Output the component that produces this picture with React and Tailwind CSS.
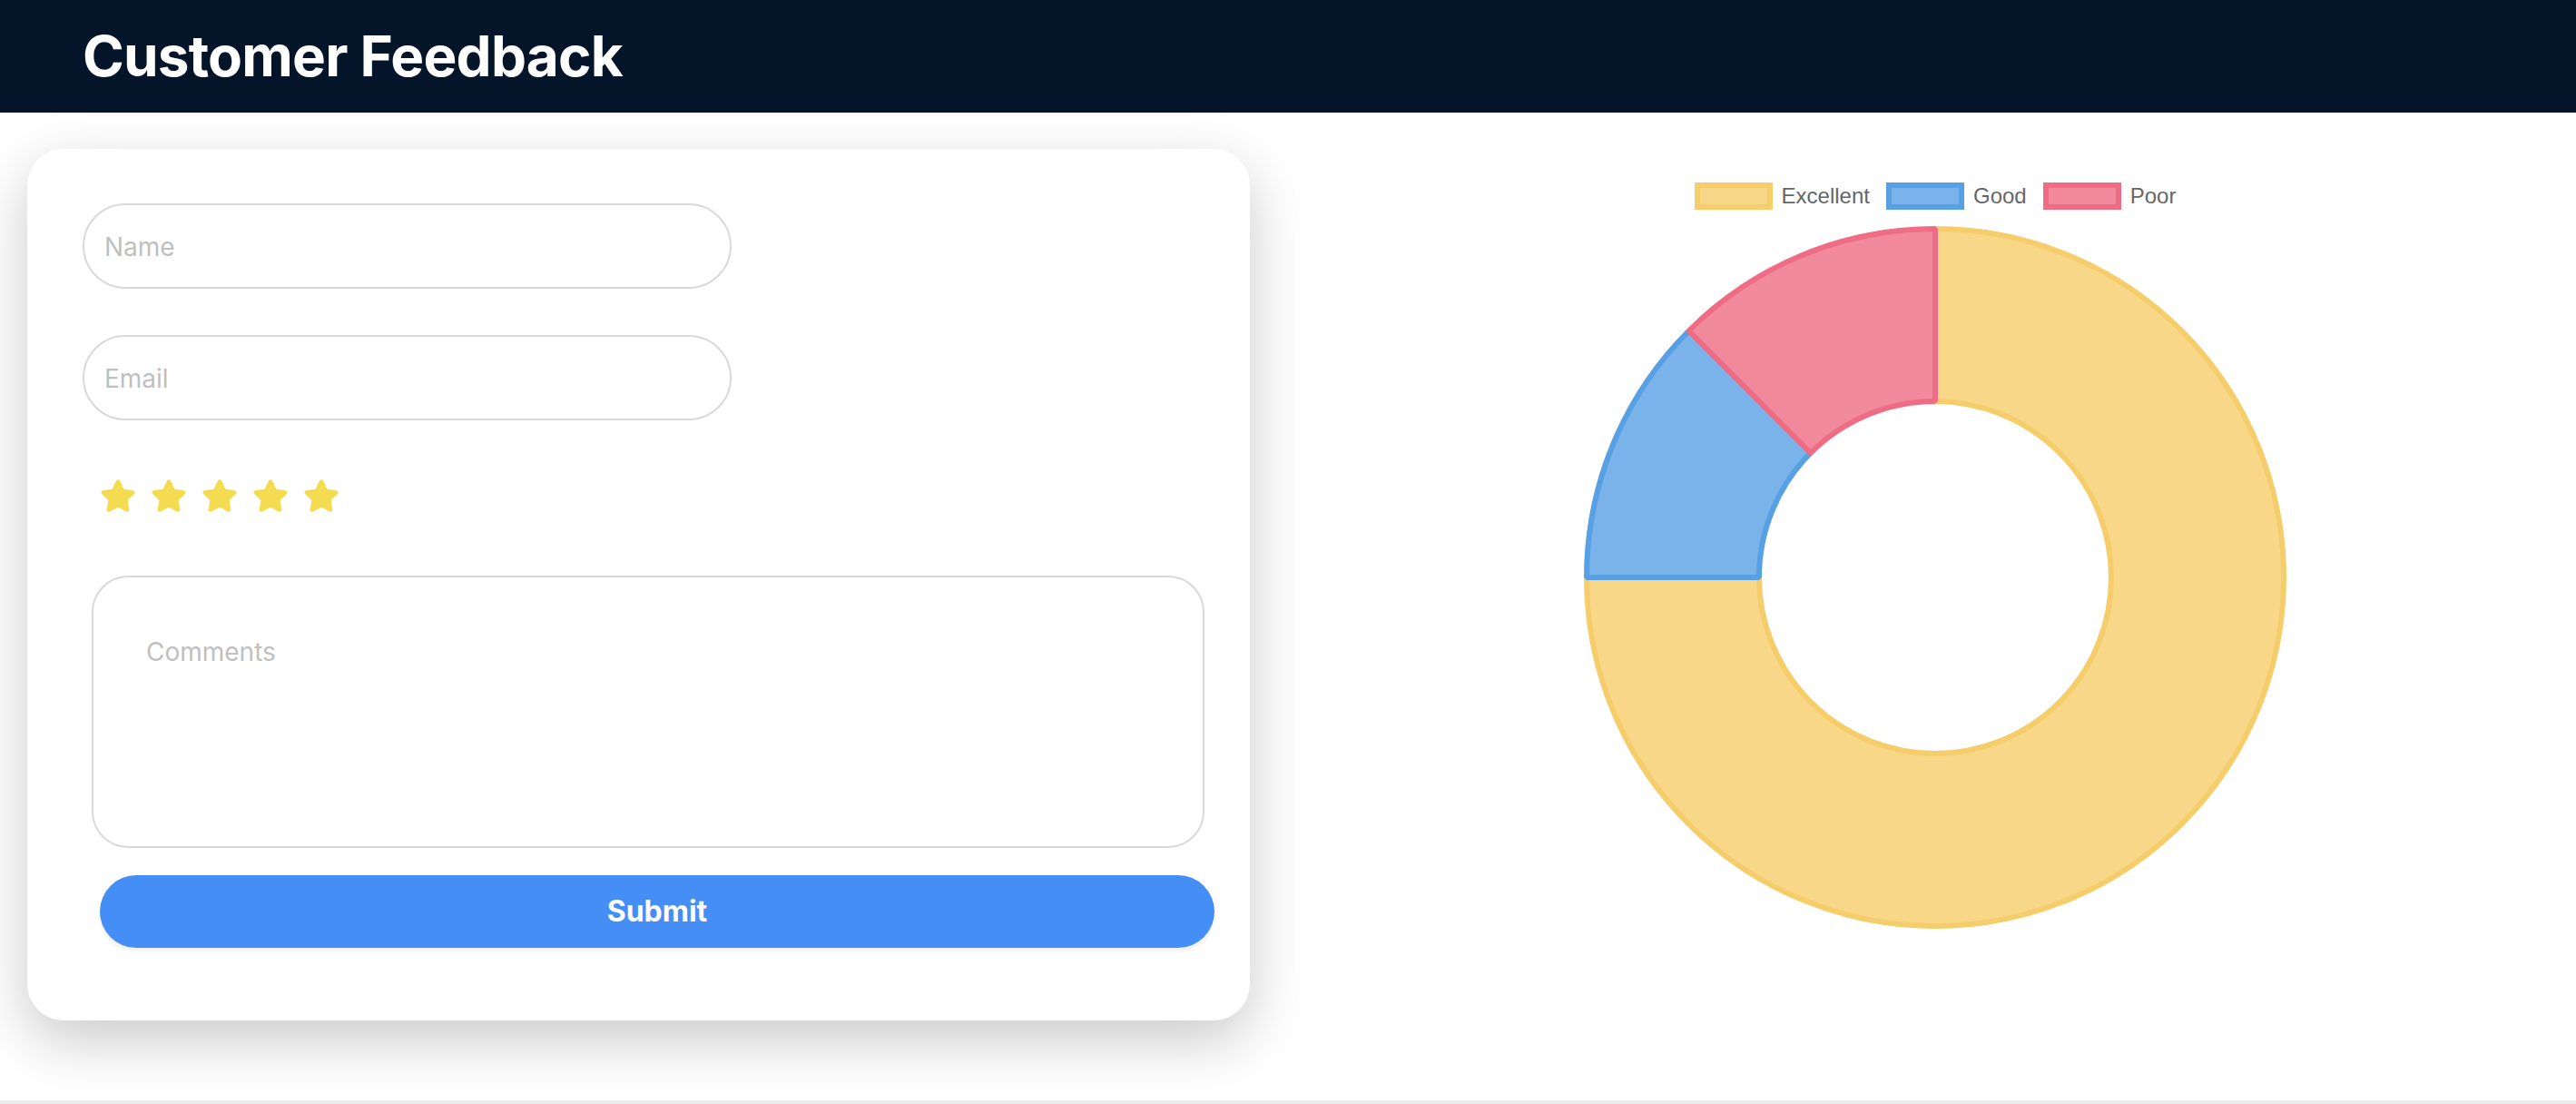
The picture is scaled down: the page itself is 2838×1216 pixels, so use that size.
import React from "react";
import { FaStar } from "react-icons/fa";

const legend = [
  { label: "Excellent", fill: "#f8d888", border: "#f5ce6b" },
  { label: "Good", fill: "#79b3e9", border: "#58a0e4" },
  { label: "Poor", fill: "#f18a9d", border: "#ee6d85" },
];

// donut slices: 6 / 1 / 1 -> 75% / 12.5% / 12.5%, drawn from 12 o'clock clockwise
const slices = [
  {
    d: "M390,6 A384,384 0 1 1 6,390 L196,390 A194,194 0 1 0 390,196 Z",
    fill: "#f8d888",
    stroke: "#f5ce6b",
  },
  {
    d: "M6,390 A384,384 0 0 1 118.5,118.5 L252.8,252.8 A194,194 0 0 0 196,390 Z",
    fill: "#79b3e9",
    stroke: "#58a0e4",
  },
  {
    d: "M118.5,118.5 A384,384 0 0 1 390,6 L390,196 A194,194 0 0 0 252.8,252.8 Z",
    fill: "#f18a9d",
    stroke: "#ee6d85",
  },
];

const FeedbackChart = () => {
  return (
    <div className="flex flex-col items-center pt-[77px]">
      <div className="flex items-center h-[30px] font-['Liberation_Sans',Arial,sans-serif] text-[24px] text-[#666666]">
        {legend.map((item, i) => (
          <div key={i} className={`flex items-center ${i > 0 ? "ml-[18px]" : ""}`}>
            <span
              className="block w-[86px] h-[30px] border-[6px]"
              style={{ background: item.fill, borderColor: item.border }}
            ></span>
            <span className="ml-[10px] leading-none">{item.label}</span>
          </div>
        ))}
      </div>
      <svg width="780" height="780" viewBox="0 0 780 780" className="mt-[15px]">
        {slices.map((s, i) => (
          <path key={i} d={s.d} fill={s.fill} stroke={s.stroke} strokeWidth="6" strokeLinejoin="bevel" />
        ))}
      </svg>
    </div>
  );
};

const App = () => {
  return (
    <div className="w-[2838px] bg-white font-['Inter','Noto_Sans',sans-serif]">
      <header className="h-[124px] bg-[#041529] flex items-center pl-[91px]">
        <h1 className="text-white text-[62px] font-bold tracking-[-0.8px] leading-none">
          Customer Feedback
        </h1>
      </header>

      <main className="flex h-[1088px]">
        <div className="w-[1426px] shrink-0">
          <div className="ml-[30px] mt-[40px] w-[1347px] h-[960px] rounded-[40px] bg-white shadow-[0_22px_64px_rgba(0,0,0,0.21)] pt-[60px] pl-[61px]">
            <input
              type="text"
              placeholder="Name"
              className="block w-[715px] h-[94px] rounded-full border-2 border-[#d9d9d9] pl-[22px] pt-[2px] text-[28px] text-[#333] placeholder:text-[#bfbfbf] outline-none"
            />
            <input
              type="email"
              placeholder="Email"
              className="block mt-[51px] w-[715px] h-[94px] rounded-full border-2 border-[#d9d9d9] pl-[22px] pt-[2px] text-[28px] text-[#333] placeholder:text-[#bfbfbf] outline-none"
            />
            <div className="flex gap-4 mt-[63px] ml-[19px]">
              {[1, 2, 3, 4, 5].map((n) => (
                <FaStar key={n} size={40} color="#f4db4f" />
              ))}
            </div>
            <textarea
              placeholder="Comments"
              className="block mt-[68px] ml-[10px] w-[1226px] h-[300px] rounded-[40px] border-2 border-[#d9d9d9] pt-[61px] pl-[58px] text-[28px] text-[#333] placeholder:text-[#bfbfbf] outline-none resize-none"
            ></textarea>
            <button className="block mt-[30px] ml-[19px] w-[1228px] h-[80px] rounded-full bg-[#448ef6] text-white text-[32px] font-bold shadow-[0_4px_4px_rgba(0,0,0,0.06)]">
              Submit
            </button>
          </div>
        </div>
        <div className="flex-1">
          <FeedbackChart />
        </div>
      </main>
      <div className="h-[4px] bg-[#ebebeb]"></div>
    </div>
  );
};

export default App;
